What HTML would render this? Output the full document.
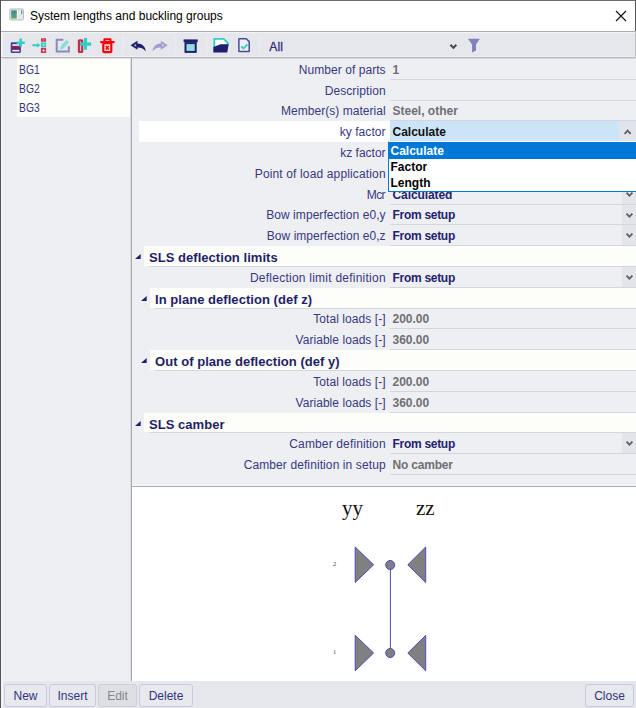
<!DOCTYPE html>
<html><head><meta charset="utf-8"><title>System lengths and buckling groups</title>
<style>
html,body{margin:0;padding:0}
body{width:636px;height:708px;position:relative;overflow:hidden;background:#edeff3;font-family:"Liberation Sans",sans-serif;font-size:12px;color:#2e2e78}
div,svg{position:absolute;box-sizing:border-box}
.title{left:1px;top:1px;width:635px;height:30px;background:#fff}
.title .t{left:29px;top:0;height:30px;line-height:31px;color:#000;font-size:12px;white-space:nowrap}
.bt{left:0;top:0;width:636px;height:1px;background:#6b6b6b}
.bl{left:0;top:0;width:1px;height:708px;background:#555}
.bl2{left:1px;top:31px;width:1px;height:677px;background:#8d8f93}
.tb{left:1px;top:32px;width:635px;height:25px;background:#e5e7ec;border-top:1px solid #f3f4f6;border-bottom:1px solid #eff0f3}
.ls{left:1px;top:32px;width:2px;height:676px;background:#f2f3f6}
.tl1{left:1px;top:31px;width:635px;height:1px;background:#a9abb0}
.tl2{left:1px;top:57px;width:634px;height:1px;background:#b4b6bb}
.tl3{left:3px;top:58px;width:633px;height:1px;background:rgba(140,140,145,0.22)}
.left{left:3px;top:58px;width:128px;height:623px;background:#edeff3}
.list{left:17px;top:58px;width:113px;height:59px;background:#fefefa}
.list div{left:2px;transform:scaleX(0.86);transform-origin:0 0;height:19px;line-height:21px;color:#33337a;position:absolute;white-space:nowrap}
.vl{left:131px;top:58px;width:1px;height:623px;background:#a9a9ac}
.vl2{left:130px;top:58px;width:1px;height:623px;background:#dcdde1}
.grid{left:133px;top:58px;width:503px;height:427px;background:#edeff3}
.lab{height:20px;line-height:20px;left:132.6px;text-align:right;white-space:nowrap;color:#38387f}
.val{height:20px;line-height:20px;left:392.5px;white-space:nowrap;font-weight:bold;color:#23236e;letter-spacing:0}
.val.ro{color:#6f6f73}
.val.blk{color:#111}
.sep{left:390px;width:246px;height:1px;background:#d3d6dd}
.hd{right:0;width:auto;background:#fdfdfa;font-weight:bold;font-size:13px;color:#1f1f66;padding-left:5px;letter-spacing:0.04px;white-space:nowrap;overflow:hidden}
.ddb{left:622px;width:14px;background:#e3e5ea}
.tri{}
.selbg{left:139px;width:497px;background:#fff}
.selval{left:390px;width:229px;background:#cce4f7}
.btn{left:619px;width:17px;background:#e1e4ea}
.hl{left:132px;top:486px;width:504px;height:1px;background:#ababae}
.hl0{left:132px;top:484px;width:504px;height:2px;background:#f4f5f7}
.pic{left:132px;top:487px;width:504px;height:194px;background:#fff}
.bot{left:3px;top:681px;width:633px;height:27px;background:#e5e7ec}
.br{left:635px;top:0;width:1px;height:31px;background:#555}
.br2{left:635px;top:31px;width:1px;height:27px;background:#bfc1c5}
.b{top:684px;height:23px;border:1px solid #c9c9df;border-radius:3px;background:#e7e9ef;color:#33337c;text-align:center;line-height:22px;white-space:nowrap}
.b.dis{color:#85858d;background:#dedfe4;border-color:#cdced5}
.dd{left:388px;top:141px;width:250px;height:51px;background:#fff;border:1px solid #0078d7;border-top-color:#fff}
.dd div{left:0;width:248px;height:16px;line-height:19px;font-weight:bold;color:#000;padding-left:1.5px;white-space:nowrap}
.dd .on{background:#0078d7;color:#fff;height:17px}
</style></head><body>
<div class="title"><div class="t">System lengths and buckling groups</div>
<svg style="left:8px;top:7px" width="16" height="14" viewBox="9 8 16 14"><defs><linearGradient id="g1" x1="0" y1="0" x2="0.3" y2="1"><stop offset="0" stop-color="#3d7fb0"/><stop offset="1" stop-color="#62a866"/></linearGradient></defs><rect x="9.9" y="9" width="13.4" height="10.9" rx="0.8" fill="#f3f3f4" stroke="#aeb2ba"/><rect x="11.2" y="10.3" width="5.6" height="8.3" fill="url(#g1)"/><rect x="18" y="10.3" width="2" height="3" fill="#e2e3e5"/><rect x="18" y="14.2" width="4.2" height="4.4" fill="#e4e5e7"/><rect x="21" y="10.3" width="1.3" height="3.8" fill="#5e9f80"/></svg>
<svg style="left:614px;top:9px" width="12" height="12" viewBox="0 0 12 12"><path d="M1 1 L11 11 M11 1 L1 11" stroke="#111" stroke-width="1.15" fill="none"/></svg>
</div>
<div class="tl1"></div>
<div class="tb"></div><div class="ls"></div>
<div class="tl2"></div>
<div class="left"></div>
<div class="list"><div style="top:2px">BG1</div><div style="top:21px">BG2</div><div style="top:40px">BG3</div></div>
<div class="grid"></div>
<svg style="left:0;top:32px" width="636" height="26" viewBox="0 32 636 26">
<!-- separators -->
<g stroke="#ebecf0" stroke-width="1.7"><path d="M123 35.8 V54.4 M175.6 35.8 V54.4 M206.6 35.8 V54.4 M259.3 35.8 V54.4"/></g>
<!-- 1 new list item -->
<rect x="10.7" y="42.3" width="10.2" height="10.7" rx="1.3" fill="#3f3f90"/>
<rect x="12.3" y="44.2" width="7" height="1.7" fill="#e9e9f4"/>
<rect x="12.3" y="46.6" width="7" height="2.5" fill="#a81238"/>
<rect x="12.3" y="49.9" width="7" height="1.6" fill="#e9e9f4"/>
<path d="M20.7 38.5 V46.8 M16.7 42.65 H24.8" stroke="#2ecfc4" stroke-width="2.5" fill="none"/>
<!-- 2 insert -->
<path d="M33.2 45.2 H38.5" stroke="#2ecfc4" stroke-width="2" stroke-linecap="round" fill="none"/>
<path d="M37 42.9 L40.3 45.2 L37 47.5 Z" fill="#2ecfc4"/>
<rect x="40.9" y="38.3" width="5.2" height="3.4" rx="0.6" fill="#c23a50"/>
<rect x="42.6" y="39.5" width="1.9" height="1" fill="#dd97a2"/>
<rect x="40.9" y="42.4" width="5.2" height="4.7" rx="0.6" fill="#2ecfc4"/>
<rect x="42.6" y="43.8" width="1.9" height="1.9" fill="#a4e8e2"/>
<rect x="40.9" y="47.8" width="5.2" height="5.2" rx="0.6" fill="#c23a50"/>
<rect x="42.7" y="49.6" width="1.8" height="1.8" fill="#fff"/>
<!-- 3 edit (disabled) -->
<path d="M63.3 39.8 H56.7 V51.4 H68.8 V46.2" stroke="#8c8cba" stroke-width="2" fill="none"/>
<path d="M59.8 49.8 L60.8 46.2 L66.6 39.8 L69.2 42.2 L63.2 48.8 Z" fill="#86dfd8"/>
<!-- 4 add column -->
<rect x="78.9" y="40.4" width="3.3" height="11.6" rx="0.4" fill="#dcc6cf" stroke="#c42e48" stroke-width="2.2"/>
<path d="M85.5 38.1 V49.8 M80 44.1 H91.1" stroke="#2ecfc4" stroke-width="3.2" fill="none"/>
<!-- 5 delete -->
<g stroke="#ff0000" fill="none">
<path d="M101.1 42.1 H113.7" stroke-width="2.2" stroke-linecap="round"/>
<path d="M104.4 41.6 V39.2 H110.5 V41.6" stroke-width="2" stroke-linejoin="round"/>
<rect x="103.3" y="43.2" width="8" height="9" rx="1" stroke-width="2.2" fill="#fbe3e6"/>
<path d="M105.8 46 L108.8 49.6 M108.8 46 L105.8 49.6" stroke-width="1.5"/>
</g>
<!-- 6 undo -->
<path d="M130.5 45.3 L137.5 40.8 L137.5 43.5 C142.4 43.6 145.2 46.6 145.8 51.2 C143.2 48.6 141 47.6 137.5 47.6 L137.5 49.8 Z" fill="#1f1f6e"/>
<path d="M133.9 45.3 L136.1 43.9 L136.1 46.7 Z" fill="#b9bbd6"/>
<!-- 7 redo -->
<path d="M167.8 45.3 L160.8 40.8 L160.8 43.5 C155.9 43.6 153.1 46.6 152.5 51.2 C155.1 48.6 157.3 47.6 160.8 47.6 L160.8 49.8 Z" fill="#a0a0cb"/>
<path d="M164.4 45.3 L162.2 43.9 L162.2 46.7 Z" fill="#d6d8e6"/>
<!-- 8 box -->
<rect x="183.6" y="39.4" width="14.1" height="2.8" fill="#1f1f6e"/>
<rect x="185.5" y="43.1" width="10.2" height="8.8" fill="#8fe0d8" stroke="#1f1f6e" stroke-width="2"/>
<!-- 9 open folder -->
<path d="M214.3 47.5 V38.9 H223.6 L227.7 42.8 V45.5" fill="#fff" stroke="#2ecfc4" stroke-width="1.9" stroke-linejoin="round"/>
<path d="M213.3 47 L220.5 44.3 L228.7 44.3 L227.2 52.4 L213.3 52.4 Z" fill="#1f1f6e"/>
<!-- 10 doc check -->
<path d="M238.9 38.7 H246.2 L249.2 41.6 V51.6 H238.9 Z" fill="#eef0f7" stroke="#4a4a98" stroke-width="1.5" stroke-linejoin="round"/>
<path d="M241.2 46.3 L243.5 48.5 L247.4 44.3" fill="none" stroke="#2ecfc4" stroke-width="1.8"/>
<text x="269.3" y="51" font-family="Liberation Sans, sans-serif" font-size="12" fill="#2e2e78" stroke="#2e2e78" stroke-width="0.3" letter-spacing="0.1">All</text>
<!-- chevron + funnel -->
<path d="M450.4 44.7 L453.4 47.8 L456.4 44.7" fill="none" stroke="#4c4c52" stroke-width="2"/>
<path d="M468 38.8 H479.8 L476 44.6 V50.6 L472 52.4 V44.6 Z" fill="#8282ba"/>
</svg>
<div class="lab" style="top:60px;letter-spacing:0.057px;width:253.06px">Number of parts</div>
<div class="val ro" style="top:60px;letter-spacing:0px">1</div>
<div class="sep" style="top:79px"></div>
<div class="lab" style="top:81px;letter-spacing:0.09px;width:253.09px">Description</div>
<div class="sep" style="top:100px"></div>
<div class="lab" style="top:101px;letter-spacing:0.03px;width:253.03px">Member(s) material</div>
<div class="val ro" style="top:101px;letter-spacing:0px">Steel, other</div>
<div class="sep" style="top:120px"></div>
<div class="selbg" style="top:121px;height:21px"></div>
<div class="selval" style="top:121px;height:20px"></div>
<div class="btn" style="top:121px;height:20px"></div>
<div class="lab" style="top:122px;letter-spacing:0.07px;width:253.07px">ky factor</div>
<div class="val blk" style="top:122px;letter-spacing:0px">Calculate</div>
<svg style="left:623px;top:128.1px" width="9" height="8" viewBox="0 0 9 8"><path d="M1.6 5.8 L4.65 2.6 L7.7 5.8" fill="none" stroke="#5e5e64" stroke-width="1.8"/></svg>
<div class="lab" style="top:143px;letter-spacing:0.0px;width:253.00px">kz factor</div>
<div class="val" style="top:143px;letter-spacing:0px">Calculate</div>
<div class="sep" style="top:162px"></div>
<div class="ddb" style="top:142px;height:20px"></div>
<svg style="left:625px;top:149.0px" width="9" height="8" viewBox="0 0 9 8"><path d="M1.5 1.7 L4.45 4.7 L7.4 1.7" fill="none" stroke="#5e5e64" stroke-width="1.8"/></svg>
<div class="lab" style="top:164px;letter-spacing:0.14px;width:253.14px">Point of load application</div>
<div class="sep" style="top:183px"></div>
<div class="ddb" style="top:163px;height:20px"></div>
<svg style="left:625px;top:170.0px" width="9" height="8" viewBox="0 0 9 8"><path d="M1.5 1.7 L4.45 4.7 L7.4 1.7" fill="none" stroke="#5e5e64" stroke-width="1.8"/></svg>
<div class="lab" style="top:185px;letter-spacing:-0.6px;width:252.40px">Mcr</div>
<div class="val" style="top:185px;letter-spacing:-0.09px">Calculated</div>
<div class="sep" style="top:204px"></div>
<div class="ddb" style="top:184px;height:20px"></div>
<svg style="left:625px;top:191.0px" width="9" height="8" viewBox="0 0 9 8"><path d="M1.5 1.7 L4.45 4.7 L7.4 1.7" fill="none" stroke="#5e5e64" stroke-width="1.8"/></svg>
<div class="lab" style="top:205px;letter-spacing:0.07px;width:253.07px">Bow imperfection e0,y</div>
<div class="val" style="top:205px;letter-spacing:-0.29px">From setup</div>
<div class="sep" style="top:224px"></div>
<div class="ddb" style="top:205px;height:19px"></div>
<svg style="left:625px;top:211.5px" width="9" height="8" viewBox="0 0 9 8"><path d="M1.5 1.7 L4.45 4.7 L7.4 1.7" fill="none" stroke="#5e5e64" stroke-width="1.8"/></svg>
<div class="lab" style="top:226px;letter-spacing:0.035px;width:253.03px">Bow imperfection e0,z</div>
<div class="val" style="top:226px;letter-spacing:-0.29px">From setup</div>
<div class="sep" style="top:245px"></div>
<div class="ddb" style="top:225px;height:20px"></div>
<svg style="left:625px;top:232.0px" width="9" height="8" viewBox="0 0 9 8"><path d="M1.5 1.7 L4.45 4.7 L7.4 1.7" fill="none" stroke="#5e5e64" stroke-width="1.8"/></svg>
<div class="hd" style="left:144px;top:246px;height:20px;line-height:24px">SLS deflection limits</div>
<div class="sep" style="left:149px;width:487px;top:266px"></div>
<svg class="tri" style="left:135px;top:254.2px" width="6" height="5" viewBox="0 0 6 5"><path d="M5.7 0 L5.7 4.9 L0 4.9 Z" fill="#1f1f66"/></svg>
<div class="lab" style="top:268px;letter-spacing:0.24px;width:253.24px">Deflection limit definition</div>
<div class="val" style="top:268px;letter-spacing:-0.29px">From setup</div>
<div class="sep" style="top:287px"></div>
<div class="ddb" style="top:267px;height:20px"></div>
<svg style="left:625px;top:274.0px" width="9" height="8" viewBox="0 0 9 8"><path d="M1.5 1.7 L4.45 4.7 L7.4 1.7" fill="none" stroke="#5e5e64" stroke-width="1.8"/></svg>
<div class="hd" style="left:150px;top:288px;height:20px;line-height:24px">In plane deflection (def z)</div>
<div class="sep" style="left:155px;width:481px;top:308px"></div>
<svg class="tri" style="left:140.7px;top:296.2px" width="6" height="5" viewBox="0 0 6 5"><path d="M5.7 0 L5.7 4.9 L0 4.9 Z" fill="#1f1f66"/></svg>
<div class="lab" style="top:309px;letter-spacing:0.07px;width:253.07px">Total loads [-]</div>
<div class="val ro" style="top:309px;letter-spacing:0px">200.00</div>
<div class="sep" style="top:328px"></div>
<div class="lab" style="top:330px;letter-spacing:0.055px;width:253.06px">Variable loads [-]</div>
<div class="val ro" style="top:330px;letter-spacing:0px">360.00</div>
<div class="sep" style="top:349px"></div>
<div class="hd" style="left:150px;top:350px;height:20px;line-height:24px">Out of plane deflection (def y)</div>
<div class="sep" style="left:155px;width:481px;top:370px"></div>
<svg class="tri" style="left:140.7px;top:358.2px" width="6" height="5" viewBox="0 0 6 5"><path d="M5.7 0 L5.7 4.9 L0 4.9 Z" fill="#1f1f66"/></svg>
<div class="lab" style="top:372px;letter-spacing:0.07px;width:253.07px">Total loads [-]</div>
<div class="val ro" style="top:372px;letter-spacing:0px">200.00</div>
<div class="sep" style="top:391px"></div>
<div class="lab" style="top:393px;letter-spacing:0.055px;width:253.06px">Variable loads [-]</div>
<div class="val ro" style="top:393px;letter-spacing:0px">360.00</div>
<div class="sep" style="top:412px"></div>
<div class="hd" style="left:144px;top:413px;height:19px;line-height:23px">SLS camber</div>
<div class="sep" style="left:149px;width:487px;top:432px"></div>
<svg class="tri" style="left:135px;top:420.7px" width="6" height="5" viewBox="0 0 6 5"><path d="M5.7 0 L5.7 4.9 L0 4.9 Z" fill="#1f1f66"/></svg>
<div class="lab" style="top:434px;letter-spacing:0.14px;width:253.14px">Camber definition</div>
<div class="val" style="top:434px;letter-spacing:-0.29px">From setup</div>
<div class="sep" style="top:453px"></div>
<div class="ddb" style="top:433px;height:20px"></div>
<svg style="left:625px;top:440.0px" width="9" height="8" viewBox="0 0 9 8"><path d="M1.5 1.7 L4.45 4.7 L7.4 1.7" fill="none" stroke="#5e5e64" stroke-width="1.8"/></svg>
<div class="lab" style="top:455px;letter-spacing:0.1px;width:253.10px">Camber definition in setup</div>
<div class="val ro" style="top:455px;letter-spacing:-0.2px">No camber</div>
<div class="sep" style="top:474px"></div><div class="dd"><div class="on" style="top:0">Calculate</div><div style="top:16px">Factor</div><div style="top:32px">Length</div></div>
<div class="hl0"></div><div class="hl"></div>
<div class="pic">
<svg style="left:0;top:0" width="504" height="194" viewBox="132 487 504 194">
<text x="342" y="514.5" font-family="Liberation Serif, serif" font-size="21" fill="#111">yy</text>
<text x="416" y="514.5" font-family="Liberation Serif, serif" font-size="21" fill="#111">zz</text>
<g fill="#808080" stroke="#4a4ac0" stroke-width="1">
<path d="M355.2 547 L355.2 582.5 L373.6 564.8 Z"/>
<path d="M425.7 547 L425.7 582.5 L407.8 564.8 Z"/>
<path d="M355.2 635.3 L355.2 670.8 L373.6 653 Z"/>
<path d="M425.7 635.3 L425.7 670.8 L407.8 653 Z"/>
<path d="M390.4 569 L390.4 648" fill="none"/>
<circle cx="390.2" cy="565" r="4.5"/>
<circle cx="390.2" cy="653" r="4.5"/>
</g>
<text x="333" y="566" font-family="Liberation Serif, serif" font-size="6.5" fill="#444">2</text>
<text x="333" y="654" font-family="Liberation Serif, serif" font-size="6.5" fill="#444">1</text>
</svg>
</div>
<div class="tl3"></div><div class="vl"></div><div class="vl2"></div>
<div class="bot"></div>
<div class="b" style="left:4px;width:43px">New</div>
<div class="b" style="left:49px;width:47px">Insert</div>
<div class="b dis" style="left:98px;width:39px">Edit</div>
<div class="b" style="left:139px;width:54px">Delete</div>
<div class="b" style="left:585px;width:49px">Close</div>
<div class="bt"></div><div class="bl"></div><div class="br"></div><div class="br2"></div>
</body></html>
